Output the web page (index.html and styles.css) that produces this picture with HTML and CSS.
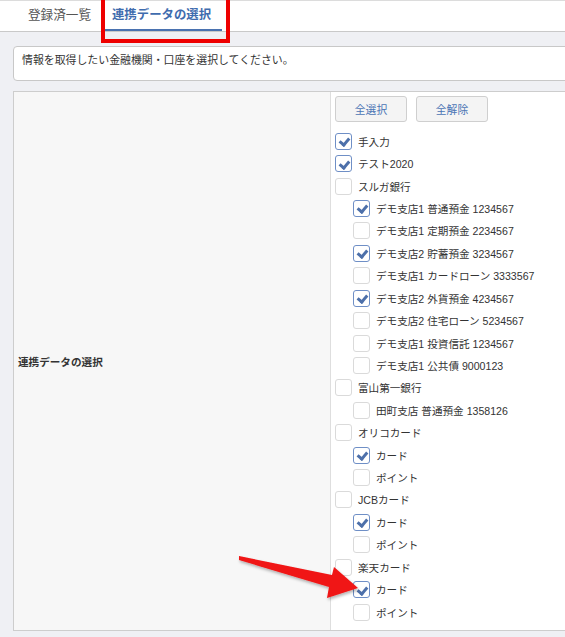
FILE: index.html
```html
<!DOCTYPE html>
<html lang="ja">
<head>
<meta charset="utf-8">
<link rel="stylesheet" href="styles.css">
</head>
<body>
<div class="tabs">
  <div class="tab">登録済一覧</div>
  <div class="tab active">連携データの選択</div>
  <div class="red-outline"></div>
</div>
<div class="content">
  <div class="info">情報を取得したい金融機関・口座を選択してください。</div>
  <div class="table">
    <div class="label-cell">連携データの選択</div>
    <div class="value-cell">
      <div class="buttons">
        <button class="btn">全選択</button>
        <button class="btn">全解除</button>
      </div>
      <ul class="list">
        <li class="row"><span class="cb checked"></span>手入力</li>
        <li class="row"><span class="cb checked"></span>テスト2020</li>
        <li class="row"><span class="cb"></span>スルガ銀行</li>
        <li class="row child"><span class="cb checked"></span>デモ支店1 普通預金 1234567</li>
        <li class="row child"><span class="cb"></span>デモ支店1 定期預金 2234567</li>
        <li class="row child"><span class="cb checked"></span>デモ支店2 貯蓄預金 3234567</li>
        <li class="row child"><span class="cb"></span>デモ支店1 カードローン 3333567</li>
        <li class="row child"><span class="cb checked"></span>デモ支店2 外貨預金 4234567</li>
        <li class="row child"><span class="cb"></span>デモ支店2 住宅ローン 5234567</li>
        <li class="row child"><span class="cb"></span>デモ支店1 投資信託 1234567</li>
        <li class="row child"><span class="cb"></span>デモ支店1 公共債 9000123</li>
        <li class="row"><span class="cb"></span>富山第一銀行</li>
        <li class="row child"><span class="cb"></span>田町支店 普通預金 1358126</li>
        <li class="row"><span class="cb"></span>オリコカード</li>
        <li class="row child"><span class="cb checked"></span>カード</li>
        <li class="row child"><span class="cb"></span>ポイント</li>
        <li class="row"><span class="cb"></span>JCBカード</li>
        <li class="row child"><span class="cb checked"></span>カード</li>
        <li class="row child"><span class="cb"></span>ポイント</li>
        <li class="row"><span class="cb"></span>楽天カード</li>
        <li class="row child"><span class="cb checked"></span>カード</li>
        <li class="row child"><span class="cb"></span>ポイント</li>
      </ul>
    </div>
  </div>
</div>
<svg class="arrow" width="565" height="637" viewBox="0 0 565 637">
  <defs>
    <filter id="sh" x="-10%" y="-10%" width="130%" height="150%">
      <feDropShadow dx="1" dy="2" stdDeviation="1.5" flood-color="#000" flood-opacity="0.3"/>
    </filter>
  </defs>
  <polygon points="239,556 332,575 334,567 358,588 327,598 329,587 239,560" fill="#f01414" filter="url(#sh)"/>
</svg>
</body>
</html>
```
FILE: styles.css
```css
html, body {
  margin: 0;
  padding: 0;
  overflow: hidden;
}
body {
  background: #eff0f4;
  font-family: "Liberation Sans", "Noto Sans CJK JP", sans-serif;
  color: #333;
  width: 565px;
  height: 637px;
  position: relative;
}
.tabs {
  position: relative;
  display: flex;
  background: #fff;
  border-top: 1px solid #dcdcdc;
  border-bottom: 1px solid #c9c9c9;
  padding-left: 18px;
  box-sizing: border-box;
  height: 32px;
}
.tab {
  font-size: 12.6px;
  color: #555;
  padding: 0 10px;
  line-height: 28px;
  height: 30px;
  box-sizing: border-box;
}
.tab.active {
  margin-left: 3px;
  color: #3f6cae;
  font-weight: bold;
  font-size: 12.4px;
  border-bottom: 2px solid #4a72b0;
  padding: 0 11px 0 8px;
}
.red-outline {
  position: absolute;
  left: 101px;
  top: -5px;
  width: 129px;
  height: 47px;
  border: 4px solid #ee0000;
  box-sizing: border-box;
}
.content {
  padding: 14px 0 0 13px;
}
.info {
  background: #fff;
  border: 1px solid #c8c8c8;
  border-radius: 4px;
  height: 35px;
  box-sizing: border-box;
  margin-right: -20px;
  padding-left: 8px;
  font-size: 10.9px;
  line-height: 27px;
}
.table {
  margin-top: 10px;
  margin-right: -20px;
  display: grid;
  grid-template-columns: 317px 1fr;
  border: 1px solid #cdcdcd;
  background: #fff;
}
.label-cell {
  background: #f7f7f7;
  border-right: 1px solid #dedede;
  display: flex;
  align-items: center;
  padding-left: 4px;
  font-size: 10.6px;
  font-weight: bold;
  color: #333;
}
.value-cell {
  padding: 4px 0 7px 4px;
}
.buttons {
  display: flex;
  gap: 9px;
  margin-bottom: 8px;
}
.btn {
  width: 72px;
  height: 26px;
  border: 1px solid #cfcfcf;
  border-radius: 3px;
  background: #f4f4f4;
  color: #4b75b5;
  font-family: "Liberation Sans", "Noto Sans CJK JP", sans-serif;
  font-size: 10.8px;
  padding: 0;
}
.list {
  list-style: none;
  margin: 0;
  padding: 0;
}
.row {
  height: 22.43px;
  display: flex;
  align-items: center;
  gap: 6px;
  font-size: 10.6px;
  color: #333;
}
.row.child {
  padding-left: 18px;
}
.cb {
  width: 17px;
  height: 17px;
  box-sizing: border-box;
  border: 1px solid #dadada;
  border-radius: 3px;
  background: #fff;
  flex: none;
  position: relative;
}
.cb.checked {
  border-color: #6f8fc6;
}
.cb.checked::after {
  content: "";
  position: absolute;
  left: 4.5px;
  top: 2.5px;
  width: 4px;
  height: 7px;
  border-right: 3px solid #4d70aa;
  border-bottom: 3px solid #4d70aa;
  transform: rotate(40deg);
}
.arrow {
  position: absolute;
  left: 0;
  top: 0;
  pointer-events: none;
}
```
